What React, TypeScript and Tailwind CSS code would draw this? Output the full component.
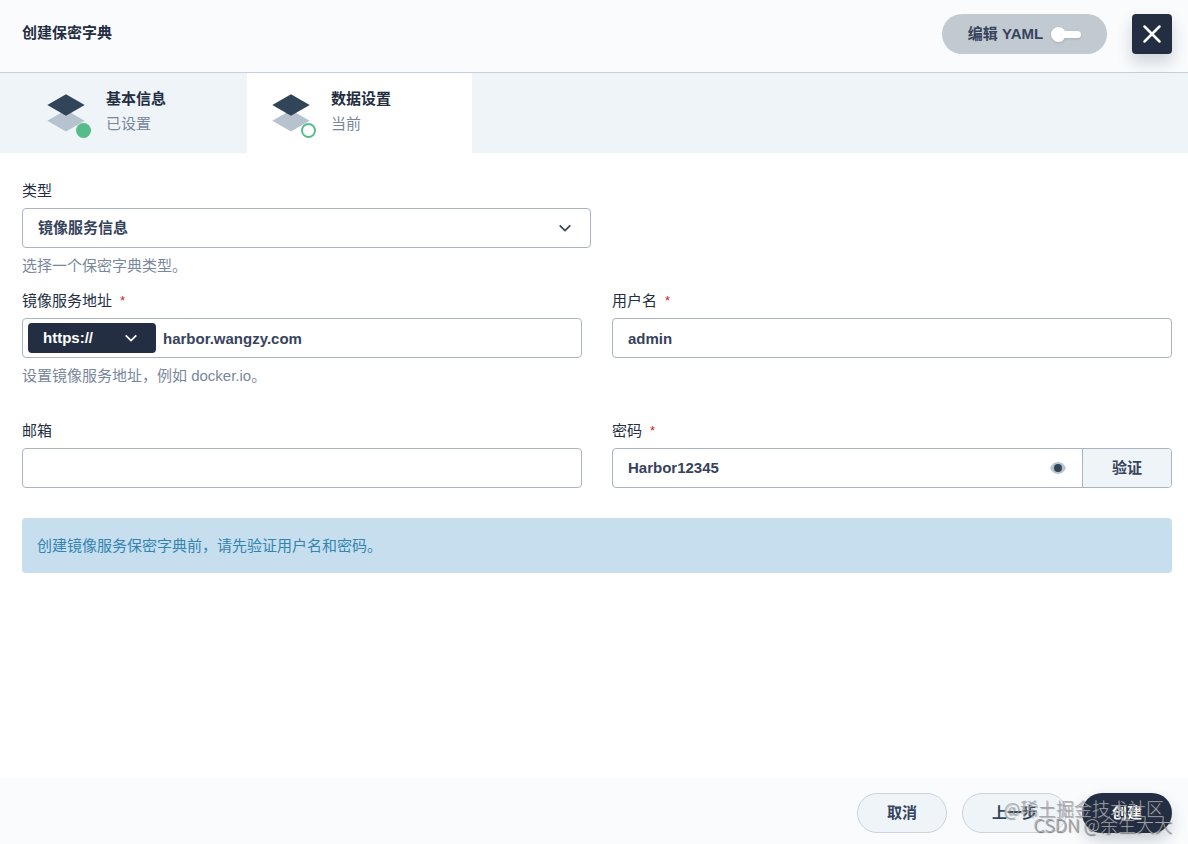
import { useState, type ReactNode } from "react";

const fieldBox =
  "h-10 w-full rounded border border-[#abb4be] bg-white px-[15px] text-[15px] font-bold text-[#36435c] outline-none focus:border-[#55bc8a]";

function LayersIcon() {
  return (
    <svg viewBox="0 0 40 40" className="size-10" aria-hidden="true">
      <path d="M20 38.5 1.3 27.7 20 17l18.7 10.700z" fill="#b6c2cd" />
      <path d="M20 22.700 1.300 11.900 20 1.200l18.700 10.700z" fill="#324558" />
    </svg>
  );
}

function Chevron({ className }: { className: string }) {
  return (
    <svg viewBox="0 0 20 20" className={className} aria-hidden="true">
      <path d="M4.700 7.300 10 12.600 15.300 7.300" fill="none" stroke="currentColor" strokeWidth="1.7" />
    </svg>
  );
}

function Step({ title, status, active }: { title: string; status: string; active?: boolean }) {
  return (
    <li className={active ? "bg-white" : ""}>
      <a
        href="#"
        aria-current={active ? "step" : undefined}
        className="flex h-20 w-[225px] items-center gap-5 pl-6"
      >
        <span className="relative">
          <LayersIcon />
          <span
            className={
              active
                ? "absolute -right-[5px] -bottom-[5px] size-[15px] rounded-full border-2 border-[#55bc8a] bg-white"
                : "absolute -right-[5px] -bottom-[5px] size-[15px] rounded-full bg-[#55bc8a]"
            }
          />
        </span>
        <span className="flex flex-col gap-[5px] pb-[3px] leading-5">
          <span className="font-bold text-[#242e42]">{title}</span>
          <span className="text-[#79879c]">{status}</span>
        </span>
      </a>
    </li>
  );
}

function Field({
  id,
  label,
  required,
  hint,
  children,
}: {
  id: string;
  label: string;
  required?: boolean;
  hint?: string;
  children: ReactNode;
}) {
  return (
    <div className="flex flex-col">
      <label htmlFor={id} className="mb-[7px] flex h-5 items-start gap-2 leading-5 text-[#242e42]">
        {label}
        {required && <span className="text-[13px] leading-5 text-[#ca2621]">*</span>}
      </label>
      {children}
      {hint && <p className="mt-2 h-5 leading-5 text-[#79879c]">{hint}</p>}
    </div>
  );
}

export default function App() {
  const [yaml, setYaml] = useState(false);
  const [visible, setVisible] = useState(true);

  return (
    <div className="flex min-h-screen flex-col bg-white font-['Liberation_Sans','Noto_Sans_CJK_SC',sans-serif] text-[15px]">
      <header className="flex h-[73px] items-start border-b border-[#c6d0da] bg-[#f9fbfd] pt-3.5 pr-4 pl-[22px]">
        <h1 className="flex h-[38px] flex-1 items-center font-bold text-[#242e42]">创建保密字典</h1>
        <label className="mr-[25px] flex h-10 w-[165px] cursor-pointer items-center justify-center gap-2 rounded-full bg-[#c1c9d1] font-bold text-[#36435c]">
          编辑 YAML
          <input
            type="checkbox"
            role="switch"
            checked={yaml}
            onChange={(e) => setYaml(e.target.checked)}
            className="peer sr-only"
          />
          <span className="flex h-4 w-[30px] items-center peer-checked:rotate-180">
            <span className="size-[15px] rounded-full bg-white shadow-sm" />
            <span className="-ml-1 h-[7px] flex-1 rounded-r-full bg-white shadow-sm" />
          </span>
        </label>
        <button
          type="button"
          aria-label="关闭"
          className="flex size-10 items-center justify-center rounded bg-[#242e42] text-white shadow-[0_8px_16px_rgba(36,46,66,0.2)]"
        >
          <svg viewBox="0 0 20 20" className="size-5" aria-hidden="true">
            <path d="M2.500 2.500 17.500 17.500M17.500 2.500 2.500 17.500" stroke="currentColor" strokeWidth="2.5" strokeLinecap="round" />
          </svg>
        </button>
      </header>

      <nav className="bg-[#eff4f9] pl-[22px]">
        <ol className="flex">
          <Step title="基本信息" status="已设置" />
          <Step title="数据设置" status="当前" active />
        </ol>
      </nav>

      <main className="flex-1 pt-7 pr-4 pl-[22px]">
        <div className="mb-[15px] w-1/2 pr-1.5">
          <Field id="type" label="类型" hint="选择一个保密字典类型。">
            <div className="relative">
              <select id="type" className={`${fieldBox} appearance-none`}>
                <option>镜像服务信息</option>
              </select>
              <Chevron className="pointer-events-none absolute top-2.5 right-4 size-5 text-[#36435c]" />
            </div>
          </Field>
        </div>

        <div className="grid grid-cols-2 gap-x-[30px] gap-y-[35px]">
          <Field id="address" label="镜像服务地址" required hint="设置镜像服务地址，例如 docker.io。">
            <div className="flex h-10 items-center rounded border border-[#abb4be] pl-[5px] focus-within:border-[#55bc8a]">
              <div className="relative">
                <select
                  aria-label="协议"
                  className="block h-[30px] w-32 appearance-none rounded bg-[#242e42] pl-[15px] font-bold text-white outline-none"
                >
                  <option>https://</option>
                  <option>http://</option>
                </select>
                <Chevron className="pointer-events-none absolute top-[5px] right-[15px] size-5 text-white" />
              </div>
              <input
                id="address"
                defaultValue="harbor.wangzy.com"
                className="h-full min-w-0 flex-1 px-[7px] font-bold text-[#36435c] outline-none"
              />
            </div>
          </Field>

          <Field id="username" label="用户名" required>
            <input id="username" defaultValue="admin" className={fieldBox} />
          </Field>

          <Field id="email" label="邮箱">
            <input id="email" type="email" className={fieldBox} />
          </Field>

          <Field id="password" label="密码" required>
            <div className="flex h-10 overflow-hidden rounded border border-[#abb4be] focus-within:border-[#55bc8a]">
              <input
                id="password"
                type={visible ? "text" : "password"}
                defaultValue="Harbor12345"
                className="min-w-0 flex-1 pl-[15px] font-bold text-[#36435c] outline-none"
              />
              <button
                type="button"
                aria-label="显示密码"
                onClick={() => setVisible(!visible)}
                className="px-4"
              >
                <svg viewBox="0 0 16 16" className="size-4" aria-hidden="true">
                  <path d="M0 8C1.800 4.200 4.500 2 8 2S14.200 4.200 16 8C14.200 11.800 11.500 14 8 14S1.800 11.800 0 8z" fill="#b6c2cd" />
                  <circle cx="8" cy="8" r="4" fill="#324558" />
                </svg>
              </button>
              <button type="button" className="w-[89px] border-l border-[#abb4be] bg-[#eff4f9] font-bold text-[#36435c]">
                验证
              </button>
            </div>
          </Field>
        </div>

        <p role="status" className="mt-[30px] rounded bg-[#c7deef] px-[15px] py-[17px] leading-[21px] text-[#3385b0]">
          创建镜像服务保密字典前，请先验证用户名和密码。
        </p>
      </main>

      <footer className="relative flex h-[66px] items-start justify-end gap-[15px] bg-[#f9fbfd] pt-[15px] pr-4 font-bold">
        <button type="button" className="h-10 w-[90px] rounded-full border border-[#ccd3db] bg-[#eff4f9] text-[#36435c]">
          取消
        </button>
        <button type="button" className="h-10 w-[105px] rounded-full border border-[#ccd3db] bg-[#eff4f9] text-[#36435c]">
          上一步
        </button>
        <button
          type="button"
          className="h-10 w-[90px] rounded-full bg-[#242e42] text-white shadow-[0_8px_16px_rgba(36,46,66,0.2)]"
        >
          创建
        </button>
        <span className="pointer-events-none absolute top-[18px] right-6 font-['Noto_Sans_CJK_SC',sans-serif] text-[18px] leading-6 font-light text-[#a0a4aa] [text-shadow:1px_1px_1px_#55555588]">
          @稀土掘金技术社区
        </span>
        <span className="pointer-events-none absolute top-[34px] right-4 font-['Noto_Sans_CJK_SC',sans-serif] text-[18px] leading-6 font-light text-[#a0a4aa] [text-shadow:1px_1px_1px_#333333aa]">
          CSDN @余生大大
        </span>
      </footer>
    </div>
  );
}
